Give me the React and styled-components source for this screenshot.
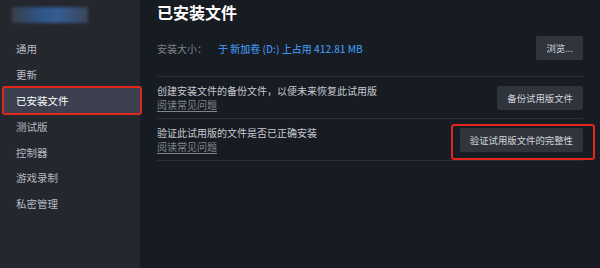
import React from 'react';
import styled, { createGlobalStyle } from 'styled-components';

const GlobalStyle = createGlobalStyle`
  html, body {
    margin: 0;
    padding: 0;
    background: #171b22;
  }
  body {
    font-family: "Noto Sans CJK SC", "Noto Sans", "Liberation Sans", sans-serif;
  }
`;

const navItems = ['通用', '更新', '已安装文件', '测试版', '控制器', '游戏录制', '私密管理'];

const rows = [
  {
    text: '创建安装文件的备份文件，以便未来恢复此试用版',
    button: '备份试用版文件',
  },
  {
    text: '验证此试用版的文件是否已正确安装',
    button: '验证试用版文件的完整性',
    marked: true,
  },
];

function App() {
  return (
    <>
      <GlobalStyle />
      <Page>
        <Sidebar>
          <Logo />
          <Nav>
            {navItems.map((item) => (
              <NavItem key={item} active={item === '已安装文件'}>
                {item}
              </NavItem>
            ))}
          </Nav>
        </Sidebar>
        <Main>
          <Heading>已安装文件</Heading>
          <SizeRow>
            <SizeText>
              <SizeLabel>安装大小：</SizeLabel>
              <SizeValue>于 新加卷 (D:) 上占用 412.81 MB</SizeValue>
            </SizeText>
            <Button>浏览...</Button>
          </SizeRow>
          {rows.map((row) => (
            <Row key={row.button}>
              <RowText>
                <Description>{row.text}</Description>
                <FaqLink>阅读常见问题</FaqLink>
              </RowText>
              <Button marked={row.marked}>{row.button}</Button>
            </Row>
          ))}
        </Main>
      </Page>
    </>
  );
}

const Page = styled.div`
  display: flex;
  width: 600px;
  height: 268px;
  overflow: hidden;
`;

const Sidebar = styled.div`
  width: 140px;
  flex-shrink: 0;
  background: #24272e;
  padding-top: 7px;
  box-sizing: border-box;
`;

// blurred account name at the top
const Logo = styled.div`
  margin-left: 12px;
  width: 76px;
  height: 16px;
  background: linear-gradient(90deg, #3a3f4a 0%, #2e5384 35%, #355d92 60%, #3a4558 100%);
  filter: blur(1.5px);
`;

const Nav = styled.div`
  display: flex;
  flex-direction: column;
  margin-top: 13px;
`;

const NavItem = styled.div`
  position: relative;
  height: 25.8px;
  display: flex;
  align-items: center;
  padding-left: ${(p) => (p.active ? '13px' : '16px')};
  margin: 0 ${(p) => (p.active ? '-1px 0 3px' : '0')};
  font-size: 10.5px;
  color: ${(p) => (p.active ? '#ffffff' : '#b7bbc3')};
  background: ${(p) => (p.active ? '#3c404f' : 'transparent')};
  border-radius: 2px;

  &::after {
    content: '';
    display: ${(p) => (p.active ? 'block' : 'none')};
    position: absolute;
    left: -1px;
    right: -1px;
    top: -2px;
    bottom: -2px;
    border: 2px solid #e3261d;
    border-radius: 3px;
  }
`;

const Main = styled.div`
  flex: 1;
  padding: 0 17px;
  background: #171b22;
`;

const Heading = styled.div`
  font-size: 16px;
  line-height: 24px;
  font-weight: 700;
  color: #ffffff;
`;

const SizeRow = styled.div`
  display: flex;
  align-items: center;
  justify-content: space-between;
  margin-top: 12px;
  padding-bottom: 16px;
  border-bottom: 1px solid #2a2e36;
`;

const SizeText = styled.div`
  font-size: 10px;
`;

const SizeLabel = styled.span`
  color: #7d838c;
  margin-right: 11px;
`;

const SizeValue = styled.span`
  color: #3f8fe4;
  font-weight: 500;
`;

const Row = styled.div`
  display: flex;
  align-items: center;
  justify-content: space-between;
  height: 41px;
  border-bottom: 1px solid #2a2e36;
`;

const RowText = styled.div`
  display: flex;
  flex-direction: column;
`;

const Description = styled.div`
  font-size: 10px;
  line-height: 14px;
  color: #c6cad0;
`;

const FaqLink = styled.div`
  font-size: 10px;
  line-height: 14px;
  color: #80868e;
  text-decoration: underline;
  text-underline-offset: 2px;
`;

const Button = styled.div`
  position: relative;
  height: 24px;
  display: flex;
  align-items: center;
  padding: 0 10px;
  font-size: 9.4px;
  color: #d2d5da;
  background: #30343d;
  border-radius: 2px;
  white-space: nowrap;

  &::after {
    content: '';
    display: ${(p) => (p.marked ? 'block' : 'none')};
    position: absolute;
    left: -9px;
    right: -12px;
    top: -4px;
    bottom: -8px;
    border: 2px solid #e3261d;
    border-radius: 3px;
  }
`;

export default App;
